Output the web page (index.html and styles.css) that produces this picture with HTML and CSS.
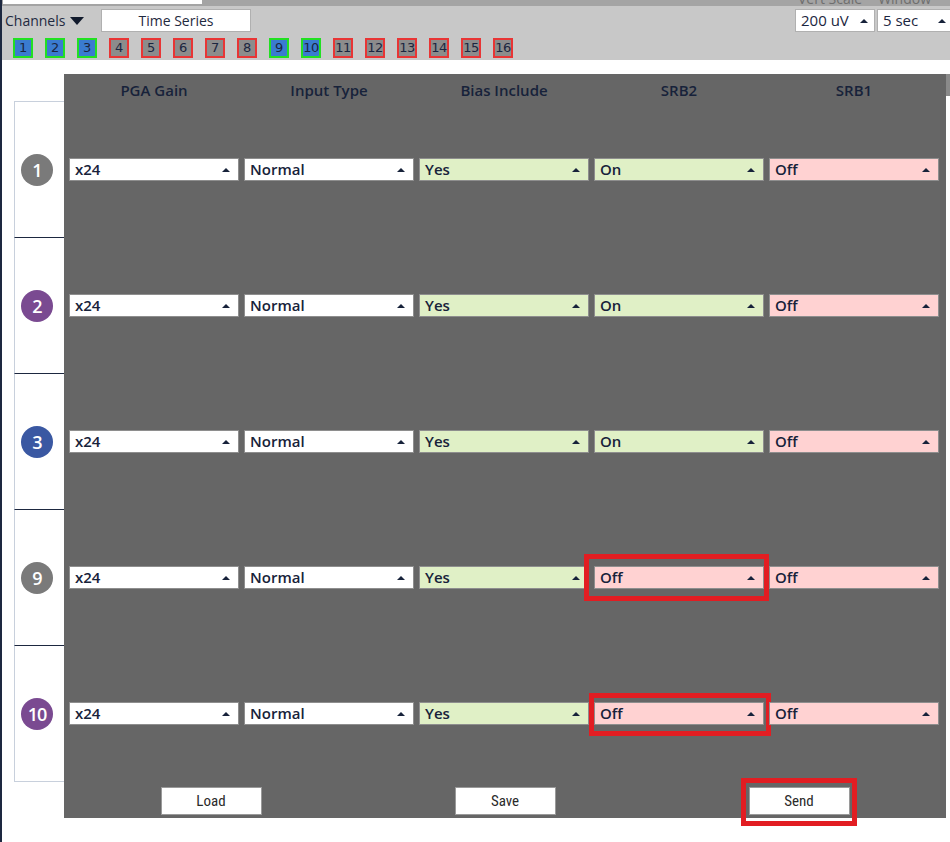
FILE: index.html
```html
<!DOCTYPE html>
<html>
<head>
<meta charset="utf-8">
<link rel="stylesheet" href="styles.css">
</head>
<body>
<div class="page">
  <div class="topstrip">
    <div class="tab"></div>
    <div class="cutlabels"><span>Vert Scale</span><span>Window</span></div>
  </div>
  <div class="header">
    <div class="hrow">
      <div class="channels">Channels <span class="caret"></span></div>
      <div class="tsbox">Time Series</div>
      <div class="hsel">
        <div class="hselect s1">200 uV <span class="arrow"></span></div>
        <div class="hselect s2">5 sec <span class="arrow"></span></div>
      </div>
    </div>
    <div class="chbtns">
      <span class="chb on">1</span><span class="chb on">2</span><span class="chb on">3</span><span class="chb off">4</span><span class="chb off">5</span><span class="chb off">6</span><span class="chb off">7</span><span class="chb off">8</span><span class="chb on">9</span><span class="chb on">10</span><span class="chb off">11</span><span class="chb off">12</span><span class="chb off">13</span><span class="chb off">14</span><span class="chb off">15</span><span class="chb off">16</span>
    </div>
  </div>
  <div class="main">
    <div class="chcol">
      <div class="chrow"><span class="circ gray">1</span></div>
      <div class="chrow"><span class="circ purple">2</span></div>
      <div class="chrow"><span class="circ blue">3</span></div>
      <div class="chrow"><span class="circ gray">9</span></div>
      <div class="chrow last"><span class="circ purple">10</span></div>
    </div>
    <div class="panel">
      <div class="heads">
        <div>PGA Gain</div><div>Input Type</div><div>Bias Include</div><div>SRB2</div><div>SRB1</div>
      </div>
      <div class="row">
        <div class="dd">x24<span class="arrow"></span></div>
        <div class="dd">Normal<span class="arrow"></span></div>
        <div class="dd green">Yes<span class="arrow"></span></div>
        <div class="dd green">On<span class="arrow"></span></div>
        <div class="dd pink">Off<span class="arrow"></span></div>
      </div>
      <div class="row">
        <div class="dd">x24<span class="arrow"></span></div>
        <div class="dd">Normal<span class="arrow"></span></div>
        <div class="dd green">Yes<span class="arrow"></span></div>
        <div class="dd green">On<span class="arrow"></span></div>
        <div class="dd pink">Off<span class="arrow"></span></div>
      </div>
      <div class="row">
        <div class="dd">x24<span class="arrow"></span></div>
        <div class="dd">Normal<span class="arrow"></span></div>
        <div class="dd green">Yes<span class="arrow"></span></div>
        <div class="dd green">On<span class="arrow"></span></div>
        <div class="dd pink">Off<span class="arrow"></span></div>
      </div>
      <div class="row">
        <div class="dd">x24<span class="arrow"></span></div>
        <div class="dd">Normal<span class="arrow"></span></div>
        <div class="dd green">Yes<span class="arrow"></span></div>
        <div class="dd pink">Off<span class="arrow"></span><span class="hl hl9"></span></div>
        <div class="dd pink">Off<span class="arrow"></span></div>
      </div>
      <div class="row">
        <div class="dd">x24<span class="arrow"></span></div>
        <div class="dd">Normal<span class="arrow"></span></div>
        <div class="dd green">Yes<span class="arrow"></span></div>
        <div class="dd pink">Off<span class="arrow"></span><span class="hl hl10"></span></div>
        <div class="dd pink">Off<span class="arrow"></span></div>
      </div>
      <div class="btns">
        <div class="cell"><div class="btn">Load</div></div>
        <div class="cell"><div class="btn">Save</div></div>
        <div class="cell"><div class="btn">Send<span class="hl hlsend"></span></div></div>
      </div>
    </div>
    <div class="scrollbit"></div>
  </div>
</div>
</body>
</html>
```

FILE: styles.css
```css
* { box-sizing: border-box; }
html, body { margin: 0; padding: 0; }
body {
  width: 950px;
  height: 842px;
  overflow: hidden;
  background: #ffffff;
  font-family: "Open Sans", "DejaVu Sans", sans-serif;
  color: #1b2640;
}
.page {
  width: 950px;
  height: 842px;
  border-left: 2px solid #1d2840;
  position: relative;
}
.topstrip {
  height: 6px;
  background: #a4a4a4;
  position: relative;
  overflow: hidden;
}
.tab {
  position: absolute;
  left: 1px;
  top: 0;
  width: 199px;
  height: 4px;
  background: #ffffff;
}
.cutlabels {
  position: absolute;
  left: 796px;
  top: -11px;
  font-size: 14px;
  color: #6e6e6e;
  display: flex;
  gap: 16px;
}
.header {
  height: 54px;
  background: #c8c8c8;
  padding: 3px 0 0 0;
}
.hrow {
  display: flex;
  align-items: center;
  height: 23px;
}
.channels {
  font-size: 14px;
  color: #1f2a40;
  margin-left: 3px;
  width: 96px;
  display: flex;
  align-items: center;
  gap: 5px;
}
.caret {
  display: inline-block;
  width: 0; height: 0;
  border-left: 7px solid transparent;
  border-right: 7px solid transparent;
  border-top: 8px solid #111a2c;
}
.tsbox {
  width: 150px;
  height: 23px;
  background: #fff;
  border: 1px solid #b0b0b0;
  font-size: 14px;
  color: #1f2a40;
  text-align: center;
  line-height: 21px;
}
.hsel {
  margin-left: auto;
  display: flex;
  gap: 2px;
}
.hselect {
  height: 23px;
  background: #fff;
  border: 1px solid #b0b0b0;
  font-size: 15px;
  color: #1b2640;
  padding-left: 5px;
  line-height: 21px;
  position: relative;
}
.s1 { width: 80px; }
.s2 { width: 76px; margin-right: -3px; }
.hselect .arrow { right: 6px; }
.chbtns {
  display: flex;
  gap: 12px;
  padding-left: 11px;
  margin-top: 6px;
}
.chb {
  width: 20px;
  height: 20px;
  border: 2px solid;
  font-size: 13px;
  line-height: 16px;
  text-align: center;
  color: #1b2640;
  font-family: "DejaVu Sans", sans-serif;
  letter-spacing: -0.5px;
}
.chb.on { background: #3a7bd0; border-color: #22e022; }
.chb.off { background: #8c8c8c; border-color: #e83535; }

.main {
  display: flex;
  align-items: flex-start;
  padding: 14px 0 0 12px;
  position: relative;
}
.chcol {
  width: 50px;
  margin-top: 27px;
  border-top: 1px solid #c8d0dc;
}
.chrow {
  height: 136px;
  border-left: 1px solid #c8d0dc;
  border-bottom: 1px solid #1d2840;
  display: flex;
  align-items: center;
  padding-left: 6px;
}
.chrow.last { border-bottom-color: #c8d0dc; }
.circ {
  width: 32px;
  height: 32px;
  border-radius: 50%;
  color: #fff;
  font-size: 18px;
  font-weight: 600;
  display: flex;
  align-items: center;
  justify-content: center;
  letter-spacing: -1px;
}
.circ.gray { background: #7a7a7a; }
.circ.purple { background: #7a4a91; }
.circ.blue { background: #3a58a2; }

.panel {
  width: 882px;
  height: 744px;
  background: #666666;
  padding: 0 7px 0 5px;
}
.heads {
  height: 27px;
  display: grid;
  grid-template-columns: repeat(5, 170px);
  column-gap: 5px;
  align-items: center;
  padding-top: 4px;
}
.heads div {
  text-align: center;
  font-size: 15px;
  font-weight: 600;
  color: #17223a;
}
.row {
  height: 136px;
  display: grid;
  grid-template-columns: repeat(5, 170px);
  column-gap: 5px;
  align-items: center;
  padding-top: 0;
}
.dd {
  height: 23px;
  background: #ffffff;
  border: 1px solid #8e8e8e;
  font-size: 15px;
  font-weight: 600;
  color: #17223a;
  padding-left: 5px;
  line-height: 21px;
  position: relative;
}
.dd.green { background: #e0f0c6; }
.dd.pink { background: #ffd2d2; }
.arrow {
  position: absolute;
  right: 8px;
  top: 9px;
  width: 0; height: 0;
  border-left: 4px solid transparent;
  border-right: 4px solid transparent;
  border-bottom: 4px solid #17223a;
}
.btns {
  display: grid;
  grid-template-columns: repeat(3, 1fr);
  margin-left: -5px;
  margin-right: -7px;
  padding-top: 6px;
}
.cell { display: flex; justify-content: center; }
.btn {
  width: 101px;
  height: 28px;
  background: #fff;
  border: 1px solid #9a9a9a;
  font-family: "Roboto", sans-serif;
  font-stretch: condensed;
  font-size: 15px;
  color: #2a2a2a;
  text-align: center;
  line-height: 26px;
  position: relative;
}
.hl {
  position: absolute;
  border: 5px solid #e21d22;
  pointer-events: none;
}
.hl9 { left: -11px; top: -13px; width: 185px; height: 47px; }
.hl10 { left: -6px; top: -10px; width: 182px; height: 43px; }
.hlsend { left: -9px; top: -10px; width: 116px; height: 48px; }
.scrollbit {
  width: 4px;
  height: 22px;
  background: #8a8a8a;
}
```
